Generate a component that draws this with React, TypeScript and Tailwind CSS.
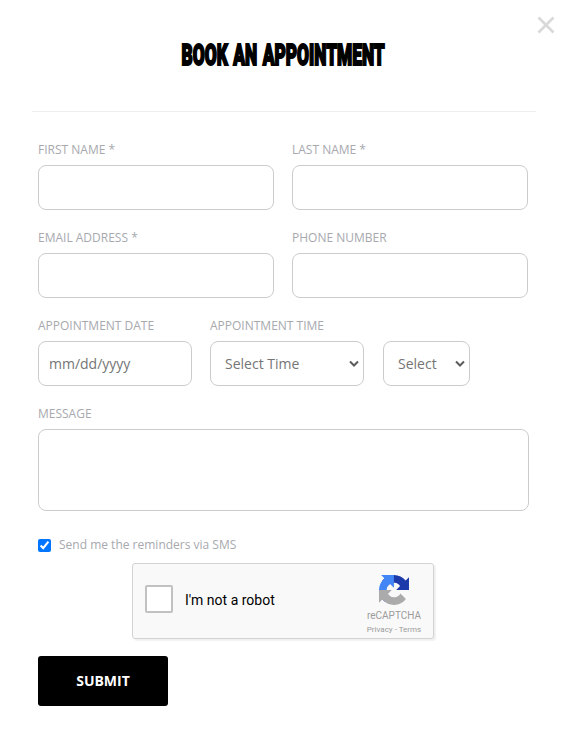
import type { ReactNode } from 'react';

const labelClass =
  'block h-[18px] text-[12px] leading-[18px] whitespace-nowrap text-[#a7a9ae]';
const fieldClass =
  'block h-[45px] w-full rounded-[8px] border border-[#cccccc] bg-white text-[14px] text-[#757575] outline-none placeholder:text-[#757575]';

function Field({
  label,
  className,
  children,
}: {
  label: string;
  className: string;
  children: ReactNode;
}) {
  return (
    <label className={className}>
      <span className={labelClass}>{label}</span>
      <div className="mt-[6px]">{children}</div>
    </label>
  );
}

function SelectBox({ text, className }: { text: string; className: string }) {
  return (
    <button
      type="button"
      className={`flex h-[45px] items-center justify-between rounded-[8px] border border-[#cccccc] bg-white pr-[4px] pl-[14px] text-[14px] text-[#757575] ${className}`}
    >
      <span>{text}</span>
      <svg width="10" height="8" viewBox="0 0 10 8" fill="none">
        <path d="M1 1.5L5 5.5L9 1.5" stroke="#5c5c5c" strokeWidth="2" />
      </svg>
    </button>
  );
}

function RecaptchaLogo() {
  return (
    <svg width="30" height="30" viewBox="0 0 64 64">
      <path
        fill="#1c3aa9"
        d="M64 31.955l-.033-1.37V4.687l-7.16 7.16C50.948 4.674 42.033.093 32.05.093c-10.4 0-19.622 4.96-25.458 12.64l11.736 11.86a15.55 15.55 0 0 1 4.754-5.334c2.05-1.6 4.952-2.906 8.968-2.906.485 0 .86.057 1.135.163 4.976.393 9.288 3.14 11.828 7.124l-8.307 8.307L64 31.953"
      />
      <path
        fill="#4285f4"
        d="M31.862.094l-1.37.033H4.594l7.16 7.16C4.58 13.147 0 22.06 0 32.046c0 10.4 4.96 19.622 12.64 25.458L24.5 45.768a15.55 15.55 0 0 1-5.334-4.754c-1.6-2.05-2.906-4.952-2.906-8.968 0-.485.057-.86.163-1.135.393-4.976 3.14-9.288 7.124-11.828l8.307 8.307L31.86.095"
      />
      <path
        fill="#ababab"
        d="M.001 32.045l.033 1.37v25.898l7.16-7.16c5.86 7.173 14.774 11.754 24.76 11.754 10.4 0 19.622-4.96 25.458-12.64l-11.736-11.86a15.55 15.55 0 0 1-4.754 5.334c-2.05 1.6-4.952 2.906-8.968 2.906-.485 0-.86-.057-1.135-.163-4.976-.393-9.288-3.14-11.828-7.124l8.307-8.307c-10.522.04-22.4.066-27.295-.005"
      />
    </svg>
  );
}

function Recaptcha() {
  return (
    <div className="ml-[94px] flex h-[76px] w-[302px] justify-between rounded-[3px] border border-[#d3d3d3] bg-[#f9f9f9] shadow-[2px_2px_1px_rgba(0,0,0,0.06)]">
      <div className="flex items-center pb-[2px] pl-[12px]">
        <div className="-mt-[2px] h-[28px] w-[28px] rounded-[2px] border-2 border-[#c1c1c1] bg-white" />
        <span className="ml-[12px] font-['Roboto',sans-serif] text-[14px] text-black">
          I'm not a robot
        </span>
      </div>
      <div className="flex w-[78px] flex-col items-center pt-[11px] font-['Roboto',sans-serif] text-[#9b9b9b]">
        <RecaptchaLogo />
        <span className="mt-[4px] text-[10px] leading-[14px]">reCAPTCHA</span>
        <span className="mt-[1px] text-[8px] leading-[12px]">Privacy - Terms</span>
      </div>
    </div>
  );
}

export default function App() {
  return (
    <div className="relative h-[734px] w-[564px] overflow-hidden bg-white font-['Open_Sans',sans-serif]">
      <button type="button" aria-label="Close" className="absolute top-[16px] left-[537px]">
        <svg width="18" height="18" viewBox="0 0 18 18">
          <path d="M1.5 1.5L16.5 16.5M16.5 1.5L1.5 16.5" stroke="#d9d9d9" strokeWidth="2.8" />
        </svg>
      </button>

      <header className="mr-[28px] ml-[32px] flex h-[112px] justify-center border-b border-[#eeeeee] pt-[37px] pr-[1px]">
        <h2 className="h-[36px] origin-center scale-x-[0.597] font-['Roboto',sans-serif] text-[29px] leading-[36px] font-black whitespace-nowrap text-black [-webkit-text-stroke:2px_#000] [word-spacing:2px]">
          BOOK AN APPOINTMENT
        </h2>
      </header>

      <form className="pt-[29px] pl-[38px]">
        <div className="flex gap-[18px]">
          <Field label="FIRST NAME *" className="w-[236px]">
            <input className={fieldClass} />
          </Field>
          <Field label="LAST NAME *" className="w-[236px]">
            <input className={fieldClass} />
          </Field>
        </div>

        <div className="mt-[19px] flex gap-[18px]">
          <Field label="EMAIL ADDRESS *" className="w-[236px]">
            <input className={fieldClass} />
          </Field>
          <Field label="PHONE NUMBER" className="w-[236px]">
            <input className={fieldClass} />
          </Field>
        </div>

        <div className="mt-[19px] flex gap-[18px]">
          <Field label="APPOINTMENT DATE" className="w-[154px]">
            <input className={`${fieldClass} px-[10px]`} placeholder="mm/dd/yyyy" />
          </Field>
          <div>
            <span className={labelClass}>APPOINTMENT TIME</span>
            <div className="mt-[6px] flex gap-[19px]">
              <SelectBox text="Select Time" className="w-[154px]" />
              <SelectBox text="Select" className="w-[87px]" />
            </div>
          </div>
        </div>

        <div className="mt-[19px]">
          <Field label="MESSAGE" className="block w-[491px]">
            <textarea className="block h-[82px] w-full resize-none rounded-[8px] border border-[#cccccc] outline-none" />
          </Field>
        </div>

        <label className="mt-[25px] mb-[9px] flex h-[18px] items-center text-[12px] text-[#a7a9ae]">
          <input type="checkbox" defaultChecked className="mt-px h-[13px] w-[13px]" />
          <span className="ml-[8px]">Send me the reminders via SMS</span>
        </label>

        <Recaptcha />

        <button
          type="button"
          className="mt-[17px] block h-[50px] w-[130px] rounded-[3px] bg-black pb-[2px] text-[14px] font-bold text-white"
        >
          SUBMIT
        </button>
      </form>
    </div>
  );
}
